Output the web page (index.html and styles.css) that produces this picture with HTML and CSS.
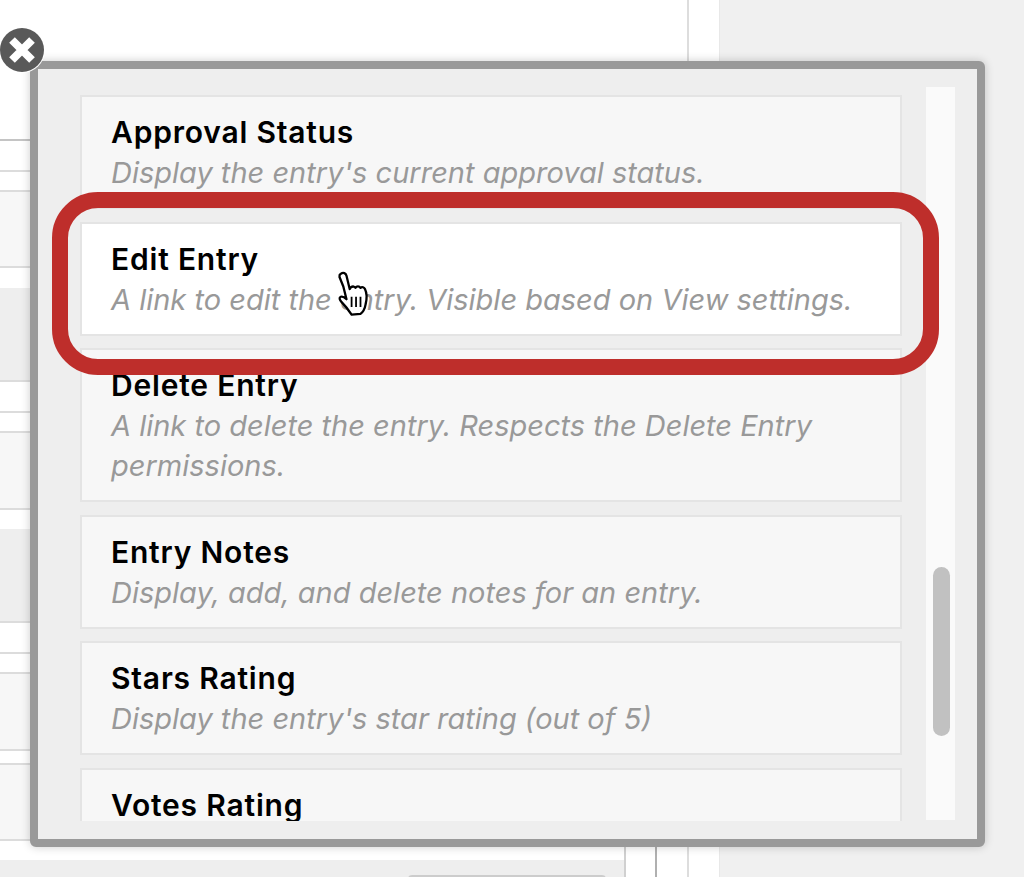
FILE: index.html
```html
<!DOCTYPE html>
<html>
<head>
	<title>Add Field</title>
	<meta charset="utf-8">
	<link rel="stylesheet" href="styles.css">
</head>
<body>
	<div class="page">
		<div class="main">
			<div class="rows">
				<div class="row first"></div>
				<div class="row h31"></div>
				<div class="row h20"></div>
				<div class="row soft h76"></div>
				<div class="row plain h20"></div>
				<div class="row grey h94"></div>
				<div class="row h31"></div>
				<div class="row h20"></div>
				<div class="row soft h77"></div>
				<div class="row plain h19"></div>
				<div class="row grey h94"></div>
				<div class="row h31"></div>
				<div class="row h20"></div>
				<div class="row soft h77"></div>
				<div class="row h14"></div>
				<div class="row soft h76"></div>
				<div class="split h19">
					<div class="fill"></div>
					<div class="cell"></div>
				</div>
				<div class="split h17">
					<div class="fill foot"><div class="button"></div></div>
					<div class="cell"></div>
				</div>
			</div>
			<div class="gutter"></div>
		</div>
		<div class="side"></div>
	</div>

	<div class="modal">
		<div class="list">
			<div class="item">
				<h3>Approval Status</h3>
				<p>Display the entry's current approval status.</p>
			</div>
			<div class="item hover">
				<h3>Edit Entry</h3>
				<p>A link to edit the entry. Visible based on View settings.</p>
			</div>
			<div class="item">
				<h3>Delete Entry</h3>
				<p>A link to delete the entry. Respects the Delete Entry permissions.</p>
			</div>
			<div class="item">
				<h3>Entry Notes</h3>
				<p>Display, add, and delete notes for an entry.</p>
			</div>
			<div class="item">
				<h3>Stars Rating</h3>
				<p>Display the entry's star rating (out of 5)</p>
			</div>
			<div class="item">
				<h3>Votes Rating</h3>
			</div>
		</div>
		<div class="track"><div class="thumb"></div></div>
	</div>

	<!-- close button -->
	<div class="close">
		<svg width="28" height="28" viewBox="0 0 28 28">
			<path d="M4 4L24 24M24 4L4 24" stroke="#fff" stroke-width="8" fill="none"/>
		</svg>
	</div>

	<!-- red highlight -->
	<div class="mark"></div>

	<!-- hand cursor -->
	<svg class="hand" width="41" height="56" viewBox="0 0 32 44">
		<path d="M6 3c2-1.500 4-.5 4.500 1.500L13 15l1-1.500c1.500-1 3-.5 3.500.5 1-1.500 3-1.500 4 0 1.200-1 3-.5 3.500 1 1.500 3 1.500 8 .5 12-.5 3-2 6-4 7.500l-7 .5c-2-3-5-7-8-10-1.500-1.500-2-3.500-.5-4 1.500-.5 3 .5 4.500 2L8 13 5 5.500C4.800 4.500 5.200 3.500 6 3z" fill="#fff" stroke="#000" stroke-width="1.800" stroke-linejoin="round"/>
		<path d="M14.500 21v8M18 21v8M21.500 21v8" stroke="#000" stroke-width="1.400" fill="none"/>
	</svg>
</body>
</html>
```

FILE: styles.css
```css
*{
	box-sizing: border-box;
}
body{
	margin: 0;
	height: 877px;
	overflow: hidden;
	background-color: #ffffff;
	font-family: "Inter", "Liberation Sans", sans-serif;
}

/* page behind the modal */
.page{
	display: flex;
	height: 877px;
}
.main{
	width: 720px;
	display: flex;
}
.rows{
	width: 689px;
	border-right: 2px solid #dddddd;
}
.gutter{
	flex: 1;
	background-color: #ffffff;
	border-right: 1px solid #e8e8e8;
}
.side{
	flex: 1;
	background-color: #f0f0f0;
}
.row{
	border-bottom: 2px solid #dcdcdc;
}
.first{
	height: 141px;
	border-bottom-color: #c4c4c4;
}
.plain{
	border-bottom: 0;
}
.grey{
	background-color: #eeeeee;
}
.soft{
	background-color: #f7f7f7;
}
.split{
	display: flex;
}
.fill{
	width: 626px;
	border-right: 2px solid #d0d0d0;
}
.foot{
	padding: 15px 0 0 408px;
	background-color: #eeeeee;
}
.button{
	width: 198px;
	height: 10px;
	background-color: #cccccc;
	border-radius: 4px;
}
.cell{
	width: 31px;
	border-right: 2px solid #b0b0b0;
}
.h14{ height: 14px; }
.h17{ height: 17px; }
.h19{ height: 19px; }
.h20{ height: 20px; }
.h31{ height: 31px; }
.h76{ height: 76px; }
.h77{ height: 77px; }
.h94{ height: 94px; }

/* modal */
.modal{
	position: absolute;
	left: 30px;
	top: 61px;
	width: 955px;
	height: 786px;
	padding: 26px 22px 26px 42px;
	display: flex;
	background-color: #eeeeee;
	border: 8px solid #999999;
	border-radius: 6px;
	box-shadow: 0 0 10px rgba(0,0,0,0.2);
}
.list{
	flex: none;
	width: 822px;
	height: 726px;
	overflow: hidden;
}
.item{
	height: 114px;
	margin-bottom: 12.500px;
	padding: 17px 20px 0 29px;
	background-color: #f7f7f7;
	border: 2px solid #e4e4e4;
}
.item:nth-child(3){
	height: 154px;
}
.hover{
	background-color: #ffffff;
}
.item h3{
	margin: 0;
	font-size: 30px;
	line-height: 36px;
	font-weight: 600;
	letter-spacing: 0.8px;
	color: #000000;
}
.item p{
	margin: 3px 0 0 0;
	font-size: 29px;
	line-height: 40px;
	font-style: italic;
	color: #999999;
}

/* scrollbar */
.track{
	flex: none;
	width: 29px;
	height: 733px;
	margin-left: 24px;
	margin-top: -8px;
	padding-left: 7px;
	background-color: #fafafa;
}
.thumb{
	width: 17px;
	height: 169px;
	margin-top: 480px;
	background-color: #c1c1c1;
	border-radius: 9px;
}

/* things lying over the modal */
.close{
	position: absolute;
	left: 0;
	top: 28px;
	width: 44px;
	height: 44px;
	display: flex;
	align-items: center;
	justify-content: center;
	background-color: #595959;
	border-radius: 50%;
	box-shadow: 0 0 0 1px #ffffff;
}
.mark{
	position: absolute;
	left: 52px;
	top: 192px;
	width: 887px;
	height: 183px;
	border: 16px solid #be2e2b;
	border-radius: 46px;
}
.hand{
	position: absolute;
	left: 333px;
	top: 270px;
}
```
